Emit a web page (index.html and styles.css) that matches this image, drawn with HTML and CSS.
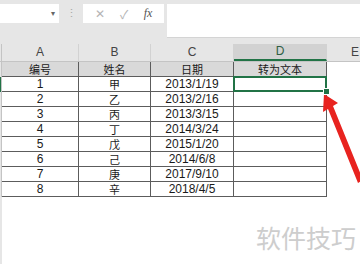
FILE: index.html
```html
<!DOCTYPE html>
<html lang="zh-CN">
<head>
    <meta charset="UTF-8">
    <title>转为文本</title>
    <link rel="stylesheet" href="styles.css">
</head>
<body>
    <div class="app">
        <div class="formula-bar">
            <div class="name-box"><span class="caret">▾</span></div>
            <div class="grip">⋮</div>
            <div class="fx-box">
                <span class="fx-btn">✕</span>
                <span class="fx-btn">✓</span>
                <span class="fx-btn fx">fx</span>
            </div>
            <div class="formula-input"></div>
        </div>

        <div class="sheet">
            <div class="col-heads">
                <div class="stub"></div>
                <div class="col-head">A</div>
                <div class="col-head">B</div>
                <div class="col-head">C</div>
                <div class="col-head active">D</div>
                <div class="col-head last">E</div>
            </div>

            <div class="row head-row">
                <div class="stub"></div>
                <div class="cell cjk">编号</div>
                <div class="cell cjk">姓名</div>
                <div class="cell cjk">日期</div>
                <div class="cell cjk">转为文本</div>
                <div class="cell blank"></div>
            </div>
            <div class="row">
                <div class="stub selected"></div>
                <div class="cell">1</div>
                <div class="cell cjk">甲</div>
                <div class="cell">2013/1/19</div>
                <div class="cell current"><span class="handle"></span></div>
                <div class="cell blank"></div>
            </div>
            <div class="row">
                <div class="stub"></div>
                <div class="cell">2</div>
                <div class="cell cjk">乙</div>
                <div class="cell">2013/2/16</div>
                <div class="cell"></div>
                <div class="cell blank"></div>
            </div>
            <div class="row">
                <div class="stub"></div>
                <div class="cell">3</div>
                <div class="cell cjk">丙</div>
                <div class="cell">2013/3/15</div>
                <div class="cell"></div>
                <div class="cell blank"></div>
            </div>
            <div class="row">
                <div class="stub"></div>
                <div class="cell">4</div>
                <div class="cell cjk">丁</div>
                <div class="cell">2014/3/24</div>
                <div class="cell"></div>
                <div class="cell blank"></div>
            </div>
            <div class="row">
                <div class="stub"></div>
                <div class="cell">5</div>
                <div class="cell cjk">戊</div>
                <div class="cell">2015/1/20</div>
                <div class="cell"></div>
                <div class="cell blank"></div>
            </div>
            <div class="row">
                <div class="stub"></div>
                <div class="cell">6</div>
                <div class="cell cjk">己</div>
                <div class="cell">2014/6/8</div>
                <div class="cell"></div>
                <div class="cell blank"></div>
            </div>
            <div class="row">
                <div class="stub"></div>
                <div class="cell">7</div>
                <div class="cell cjk">庚</div>
                <div class="cell">2017/9/10</div>
                <div class="cell"></div>
                <div class="cell blank"></div>
            </div>
            <div class="row">
                <div class="stub"></div>
                <div class="cell">8</div>
                <div class="cell cjk">辛</div>
                <div class="cell">2018/4/5</div>
                <div class="cell"></div>
                <div class="cell blank"></div>
            </div>
            <div class="filler"></div>
        </div>

        <svg class="arrow" width="360" height="264" viewBox="0 0 360 264">
            <polygon points="324,94 338,103 333,106 363,180 358,183 328,109 323,112" fill="#e8231f"/>
        </svg>

        <div class="watermark">软件技巧</div>
    </div>
</body>
</html>
```

FILE: styles.css
```css
body {
    margin: 0;
    padding: 0;
    font-family: "Liberation Sans", "Noto Sans CJK SC", sans-serif;
    color: #1a1a1a;
}
.app {
    position: relative;
    width: 360px;
    height: 264px;
    overflow: hidden;
    background: #e6e6e6;
    display: flex;
    flex-direction: column;
}

/* formula bar */
.formula-bar {
    display: flex;
    align-items: flex-start;
    height: 38px;
    padding-top: 4px;
    box-sizing: border-box;
}
.name-box {
    width: 59px;
    height: 19px;
    background: #fff;
    display: flex;
    justify-content: flex-end;
    align-items: center;
    padding-right: 4px;
    box-sizing: border-box;
}
.caret {
    font-size: 8px;
    color: #666;
}
.grip {
    width: 24px;
    height: 19px;
    text-align: center;
    font-size: 11px;
    line-height: 19px;
    color: #a8a8a8;
}
.fx-box {
    width: 81px;
    height: 19px;
    background: #fff;
    display: flex;
    justify-content: space-around;
    align-items: center;
    padding: 0 4px;
    box-sizing: border-box;
}
.fx-btn {
    font-size: 12px;
    color: #b4b4b4;
}
.fx {
    font-family: "Liberation Serif", serif;
    font-style: italic;
    color: #555;
    font-size: 12px;
}
.formula-input {
    flex: 1;
    height: 33px;
    margin-left: 3px;
    background: #fff;
    border-bottom: 1px solid #d4d4d4;
}

/* sheet */
.sheet {
    flex: 1;
    display: flex;
    flex-direction: column;
    margin-top: 6px;
}
.col-heads,
.row {
    display: grid;
    grid-template-columns: 2px 77px 72px 83px 93px 1fr;
}
.col-heads {
    height: 18px;
    border-bottom: 1px solid #c4c4c4;
    box-sizing: border-box;
}
.col-head {
    font-size: 12px;
    line-height: 17px;
    text-align: center;
    color: #444;
    border-right: 1px solid #d2d2d2;
}
.col-head.active {
    background: #d2d2d2;
    border-bottom: 2px solid #217346;
    line-height: 15px;
    color: #2e5e44;
}
.col-head.last {
    text-align: left;
    padding-left: 24px;
    border-right: none;
}
.stub {
    background: #e6e6e6;
    border-right: 1px solid #c4c4c4;
}
.stub.selected {
    background: #217346;
}
.row {
    height: 15px;
    background: #fff;
}
.cell {
    border-right: 1px solid #5c5c5c;
    border-bottom: 1px solid #5c5c5c;
    font-size: 12px;
    line-height: 14px;
    text-align: center;
    white-space: nowrap;
}
.cjk {
    font-family: "Noto Sans CJK SC", sans-serif;
    font-size: 11px;
}
.head-row .cell {
    background: #d9d9d9;
}
.cell.blank {
    background: #fff !important;
    border: none;
}
.cell.current {
    position: relative;
}
.cell.current::after {
    content: "";
    position: absolute;
    left: -1px;
    top: -1px;
    right: -1px;
    bottom: -1px;
    border: 2px solid #217346;
}
.handle {
    position: absolute;
    right: -4px;
    bottom: -4px;
    width: 5px;
    height: 5px;
    background: #217346;
    border: 1px solid #fff;
    z-index: 1;
}
.filler {
    flex: 1;
    background: #fff;
    border-left: 2px solid #e6e6e6;
}

/* overlays */
.arrow {
    position: absolute;
    left: 0;
    top: 0;
}
.watermark {
    position: absolute;
    left: 256px;
    top: 219px;
    font-family: "Noto Sans CJK SC", sans-serif;
    font-size: 25px;
    color: #cdcdcd;
}
```
